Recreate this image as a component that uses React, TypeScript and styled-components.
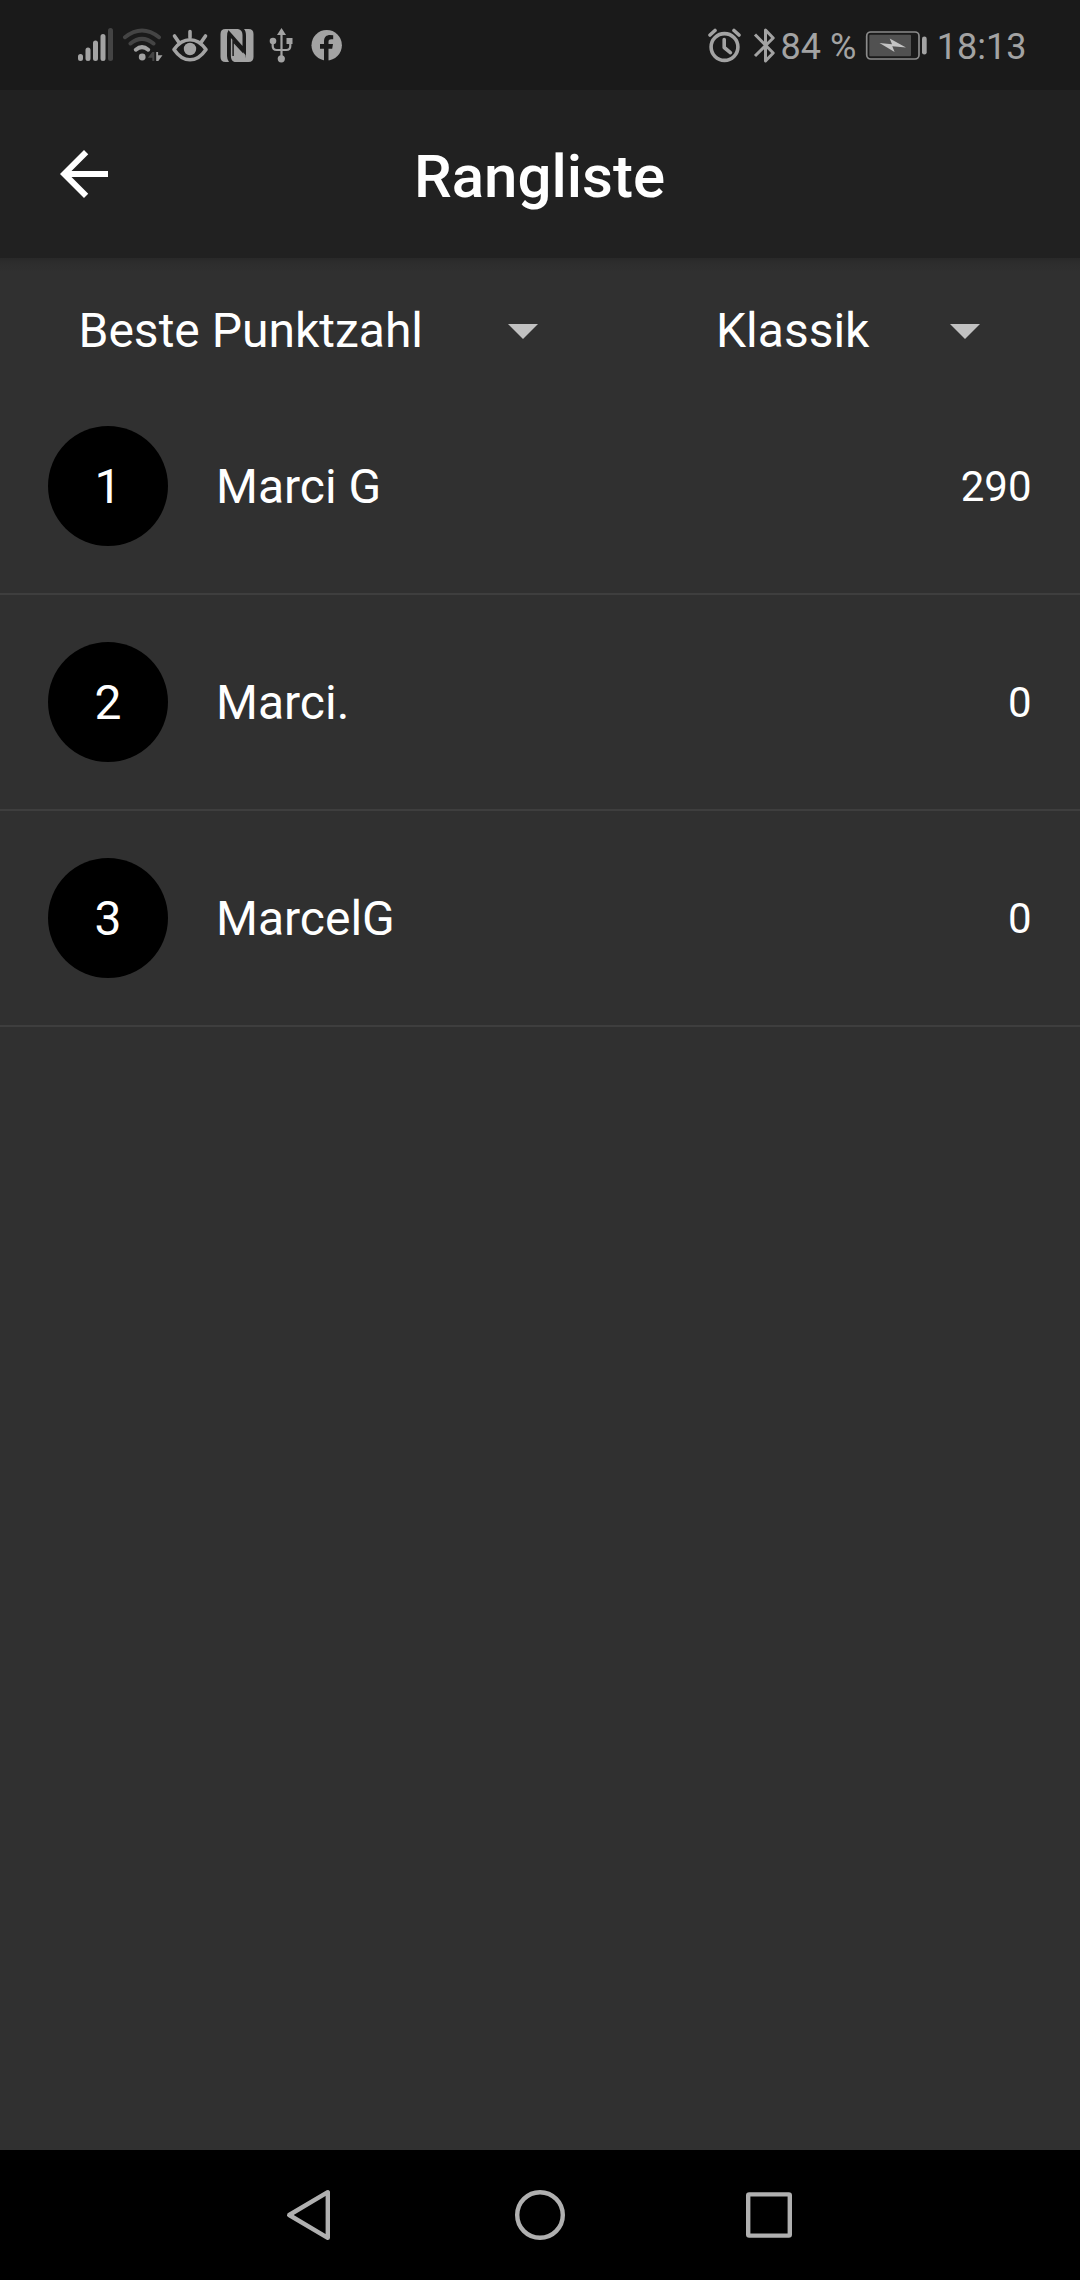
import React from 'react';
import styled, { createGlobalStyle } from 'styled-components';

const GlobalStyle = createGlobalStyle`
  html, body { margin: 0; padding: 0; background: #303030; }
  * { box-sizing: border-box; }
`;

const Screen = styled.div`
  display: flex;
  flex-direction: column;
  width: 1080px;
  height: 2280px;
  overflow: hidden;
  background: #303030;
  color: #fff;
  font-family: Roboto, 'Noto Sans', sans-serif;
`;

const StatusBar = styled.header`
  flex: none;
  height: 90px;
  display: flex;
  justify-content: space-between;
  padding: 0 53.5px 0 76px;
  background: #1a1a1a;
  color: #a3a3a3;
`;

const StatusGroup = styled.div`
  display: flex;
  align-items: center;
`;

const StatusIcon = styled.svg<{ $gap?: number }>`
  display: block;
  flex: none;
  margin-left: ${(p) => p.$gap ?? 0}px;
`;

const StatusText = styled.span<{ $gap: number }>`
  margin-left: ${(p) => p.$gap}px;
  padding-top: 4px;
  font-size: 36px;
  line-height: 42px;
  white-space: pre;
`;

const AppBar = styled.div`
  flex: none;
  height: 168px;
  display: grid;
  grid-template-columns: 72px 1fr 72px;
  align-items: center;
  padding: 0 48px;
  background: #212121;
`;

const BackButton = styled.button`
  display: block;
  width: 72px;
  height: 72px;
  padding: 0;
  border: 0;
  background: none;
  color: #fff;
`;

const Title = styled.h1`
  margin: 0;
  padding: 6px 1px 0 0;
  text-align: center;
  font-size: 60px;
  line-height: 70px;
  font-weight: 500;
`;

const Content = styled.main`
  flex: 1;
  background: linear-gradient(#292929 0, #2d2d2d 5px, #303030 14px);
`;

const Filters = styled.div`
  height: 120px;
  display: flex;
  justify-content: space-between;
  padding: 0 79px 0 78.5px;
`;

const Select = styled.button<{ $width: number }>`
  width: ${(p) => p.$width}px;
  height: 144px;
  display: flex;
  align-items: center;
  justify-content: space-between;
  padding: 0;
  border: 0;
  background: none;
  color: #fff;
  font: 400 48px/56px Roboto, sans-serif;
`;

const SelectLabel = styled.span`
  padding-top: 2px;
`;

const List = styled.ol`
  margin: 0;
  padding: 0;
  list-style: none;
`;

const Row = styled.li`
  height: 216px;
  display: flex;
  align-items: center;
  padding: 0 48.5px 0 48px;
  box-shadow: inset 0 -1px #3e3e3e, 0 1px #3e3e3e;
`;

const Rank = styled.span`
  width: 120px;
  height: 120px;
  flex: none;
  display: flex;
  align-items: center;
  justify-content: center;
  border-radius: 50%;
  background: #000;
  font-size: 48px;
`;

const Name = styled.span`
  flex: 1;
  margin-left: 48px;
  font-size: 48px;
`;

const Score = styled.span`
  font-size: 42px;
`;

const NavBar = styled.nav`
  flex: none;
  height: 130px;
  display: flex;
  align-items: center;
  justify-content: center;
  gap: 169px;
  background: #000;
`;

const NavIcon = styled.svg`
  display: block;
  width: 60px;
  height: 60px;
  fill: none;
  stroke: #b0b0b0;
  stroke-width: 4.4;
  stroke-linejoin: round;
`;

const Caret = () => (
  <svg width="72" height="72" viewBox="0 0 24 24" fill="#c1c1c1">
    <path d="M7 10l5 5 5-5z" />
  </svg>
);

const players = [
  { name: 'Marci G', score: 290 },
  { name: 'Marci.', score: 0 },
  { name: 'MarcelG', score: 0 },
];

export default function App() {
  return (
    <Screen>
      <GlobalStyle />
      <StatusBar>
        <StatusGroup>
          <StatusIcon width="40" height="40" viewBox="76 25 40 40" fill="none" stroke="#a3a3a3" strokeWidth="5" strokeLinecap="round">
            <path d="M80.500 56.500v2M88 50v8.500M95.500 43v15.500M103 36.500v22" />
            <path d="M110.500 30.500v28" stroke="#444" />
          </StatusIcon>
          <StatusIcon width="46" height="40" viewBox="120 25 46 40" $gap={4} fill="none" stroke="#444" strokeWidth="4" strokeLinecap="round">
            <path d="M125 37.200Q142 23.800 159 37.200M130.500 43.500Q142 34.200 153.500 43.500" />
            <path d="M135.800 49.700Q142 44.500 148.200 49.700" stroke="#a3a3a3" />
            <circle cx="142.200" cy="57" r="3.400" fill="#a3a3a3" stroke="none" />
            <path d="M154.300 52v9h-2v-3.200h-4.500l4.500-5.800z" fill="#444" stroke="none" />
            <path d="M156.200 52h1.900v3.200h4.400l-4.200 5.800h-2.100z" fill="#a3a3a3" stroke="none" />
          </StatusIcon>
          <StatusIcon width="40" height="40" viewBox="170 25 40 40" $gap={4} fill="none" stroke="#a3a3a3" strokeWidth="3.600" strokeLinecap="round" strokeLinejoin="round">
            <path d="M174 49.500Q181 39.800 190 39.800T206 49.500Q199 59.800 190 59.800T174 49.500z" />
            <circle cx="190" cy="49" r="6.200" fill="#a3a3a3" stroke="none" />
            <path d="M190 31.500v6M174.500 36l4 5.800M205.500 36l-4 5.800" />
          </StatusIcon>
          <StatusIcon width="34" height="40" viewBox="219.500 25 34 40" $gap={9.5} fill="#a3a3a3">
            <path d="M225 29h3.500Q226.500 32 226.500 37v19q0 3.500 2 6H225q-5 0-5-5V34q0-5 5-5z" />
            <path d="M227 29h10.500Q242 30 242 35v11z" />
            <path d="M230.400 38L245 55 246 62h-11.900q-3.700-1-3.700-6z" />
            <path d="M243.500 29h4.500q5 0 5 5v23q0 5-5 5h-2.500V36q0-5-2-7z" />
            <path d="M232.600 56V41.500L242 51.500v-4" fill="none" stroke="#1a1a1a" strokeWidth="1.500" />
          </StatusIcon>
          <StatusIcon width="26" height="40" viewBox="269 25 26 40" $gap={15.5} fill="none" stroke="#a3a3a3" strokeWidth="2.200">
            <path d="M281.500 33v25M272.700 41v5q0 4 4 4h9.600q4 0 4-4v-5" />
            <path d="M281.500 28l4.500 7h-9z" fill="#a3a3a3" stroke="none" />
            <circle cx="281.300" cy="58.800" r="3.600" fill="#a3a3a3" stroke="none" />
            <circle cx="273" cy="41" r="3.300" fill="#a3a3a3" stroke="none" />
            <path d="M286.500 38h6v6h-6z" fill="#a3a3a3" stroke="none" />
          </StatusIcon>
          <StatusIcon width="32" height="40" viewBox="311 25 32 40" $gap={16}>
            <circle cx="326.700" cy="45.300" r="15.200" fill="#a3a3a3" />
            <path d="M324 61V48.800h-4V44h4v-2.500c0-4.500 2.500-6.500 6-6.500l3.200.3v4h-1.900c-2.300 0-2.800 1.200-2.800 2.600V44h4.500l-.8 4.800h-3.700V61z" fill="#1a1a1a" />
          </StatusIcon>
        </StatusGroup>
        <StatusGroup>
          <StatusIcon width="34" height="40" viewBox="709 25 34 40" fill="none" stroke="#a3a3a3" strokeWidth="3.600">
            <circle cx="725.500" cy="47" r="13.400" />
            <path d="M725.200 39.500v8l6.200 5.200" strokeLinejoin="round" strokeLinecap="round" />
            <path d="M711 35l5-4.500M740 35l-5-4.500" strokeLinecap="round" />
          </StatusIcon>
          <StatusIcon width="24" height="40" viewBox="753 25 24 40" $gap={10.5} fill="none" stroke="#a3a3a3" strokeWidth="3">
            <path d="M755 34.500L773.200 53l-7.700 8V30l7.700 8L755 56" strokeLinejoin="round" />
          </StatusIcon>
          <StatusText $gap={4}>84 %</StatusText>
          <StatusIcon width="63" height="40" viewBox="865 25 63 40" $gap={9}>
            <rect x="866.700" y="32" width="52.300" height="27" rx="4" fill="none" stroke="#8b8b8b" strokeWidth="1.700" />
            <rect x="869.300" y="34.700" width="41.700" height="21.600" rx="1" fill="#515151" />
            <rect x="922" y="36.500" width="4.700" height="18" rx="2.300" fill="#a3a3a3" />
            <path d="M879.500 43l12.500 1.200-2.300-5.700L906 47.400l-13.700-1.200 2.300 5.800z" fill="#c4c4c4" />
          </StatusIcon>
          <StatusText $gap={8.5}>18:13</StatusText>
        </StatusGroup>
      </StatusBar>
      <AppBar>
        <BackButton aria-label="Zurück">
          <svg width="72" height="72" viewBox="0 0 24 24" fill="currentColor">
            <path d="M20 11H7.830l5.590-5.590L12 4l-8 8 8 8 1.410-1.410L7.830 13H20v-2z" />
          </svg>
        </BackButton>
        <Title>Rangliste</Title>
      </AppBar>
      <Content>
        <Filters>
          <Select $width={480.5}><SelectLabel>Beste Punktzahl</SelectLabel><Caret /></Select>
          <Select $width={285}><SelectLabel>Klassik</SelectLabel><Caret /></Select>
        </Filters>
        <List>
          {players.map((player, i) => (
            <Row key={player.name}>
              <Rank>{i + 1}</Rank>
              <Name>{player.name}</Name>
              <Score>{player.score}</Score>
            </Row>
          ))}
        </List>
      </Content>
      <NavBar>
        <NavIcon viewBox="281 2185 60 60">
          <path d="M289.200 2215L327.800 2192.200v45.600z" />
        </NavIcon>
        <NavIcon viewBox="510 2185 60 60">
          <circle cx="540" cy="2215" r="22.800" />
        </NavIcon>
        <NavIcon viewBox="739 2185 60 60">
          <rect x="748.200" y="2194.400" width="41.600" height="41.200" rx="1" />
        </NavIcon>
      </NavBar>
    </Screen>
  );
}
